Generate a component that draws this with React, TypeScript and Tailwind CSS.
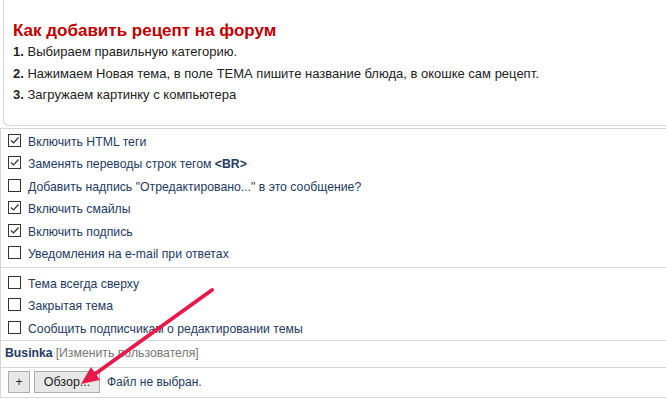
import React from "react";

const steps = [
    "Выбираем правильную категорию.",
    "Нажимаем Новая тема, в поле ТЕМА пишите название блюда, в окошке сам рецепт.",
    "Загружаем картинку с компьютера",
];

const options = [
    { label: "Включить HTML теги", checked: true },
    { label: "Заменять переводы строк тегом", bold: "<BR>", checked: true },
    { label: "Добавить надпись \"Отредактировано...\" в это сообщение?", checked: false },
    { label: "Включить смайлы", checked: true },
    { label: "Включить подпись", checked: true },
    { label: "Уведомления на e-mail при ответах", checked: false },
];

const modOptions = [
    { label: "Тема всегда сверху", checked: false },
    { label: "Закрытая тема", checked: false },
    { label: "Сообщить подписчикам о редактировании темы", checked: false },
];

function Box({ checked }: { checked: boolean }) {
    return (
        <span className="w-[13px] h-[13px] border border-[#333] bg-white flex items-center justify-center shrink-0">
            {checked && (
                <svg width="11" height="11" viewBox="0 0 11 11">
                    <path d="M2 5.5 L4.5 8 L9.5 2.5" fill="none" stroke="#333" strokeWidth="1.2" />
                </svg>
            )}
        </span>
    );
}

function Row({ label, bold, checked }: { label: string; bold?: string; checked: boolean }) {
    return (
        <div className="h-[22.5px] flex items-center pl-[7px] gap-[7px]">
            <Box checked={checked} />
            <span className="mt-[3px] text-[12.25px] text-[#233a63]">
                {label}
                {bold && <b> {bold}</b>}
            </span>
        </div>
    );
}

export default function App() {
    return (
        <div className="relative w-[666px] h-[400px] bg-white overflow-hidden font-['Liberation_Sans',Arial,sans-serif]">
            <div className="ml-[3px] h-[126px] border-l border-b border-[#d6d6d6] rounded-bl-[6px] pt-[21px] pl-[9px]">
                <p className="text-[17px] leading-[20px] font-bold text-[#c00000]">Как добавить рецепт на форум</p>
                {steps.map((s, i) => (
                    <p key={i} className="text-[13px] leading-[21.5px] text-[#222]">
                        <b>{i + 1}.</b> {s}
                    </p>
                ))}
            </div>

            <div className="mt-[2px] border-t border-l border-[#d6d6d6]">
                <div className="pb-[3px] border-b border-[#d6d6d6]">
                    {options.map((o, i) => (
                        <Row key={i} {...o} />
                    ))}
                </div>
                <div className="pt-[3px] pb-[1px] border-b border-[#d6d6d6]">
                    {modOptions.map((o, i) => (
                        <Row key={i} {...o} />
                    ))}
                </div>
                <div className="h-[27px] flex items-center pl-[4px] text-[12.25px] border-b border-[#d6d6d6]">
                    <b className="text-[#233a63]">Businka</b>
                    <span className="text-[#777] ml-[3px]">[Изменить пользователя]</span>
                </div>
                <div className="h-[30px] flex items-center pl-[7px] border-b border-[#d6d6d6]">
                    <button className="w-[22px] h-[22px] border border-[#adadad] bg-[#e8e8e8] text-[12px] text-[#222]">+</button>
                    <button className="ml-[4px] w-[66px] h-[22px] border border-[#adadad] bg-[#e8e8e8] text-[12.5px] text-[#222]">Обзор...</button>
                    <span className="ml-[7px] text-[12px] text-[#233a63]">Файл не выбран.</span>
                </div>
            </div>

            <svg className="absolute left-0 top-0 pointer-events-none" width="666" height="400">
                <line x1="212" y1="290" x2="95" y2="374" stroke="#e8194b" strokeWidth="4" strokeLinecap="round" />
                <polygon points="81,384 100,380 91,367" fill="#e8194b" />
            </svg>
        </div>
    );
}
